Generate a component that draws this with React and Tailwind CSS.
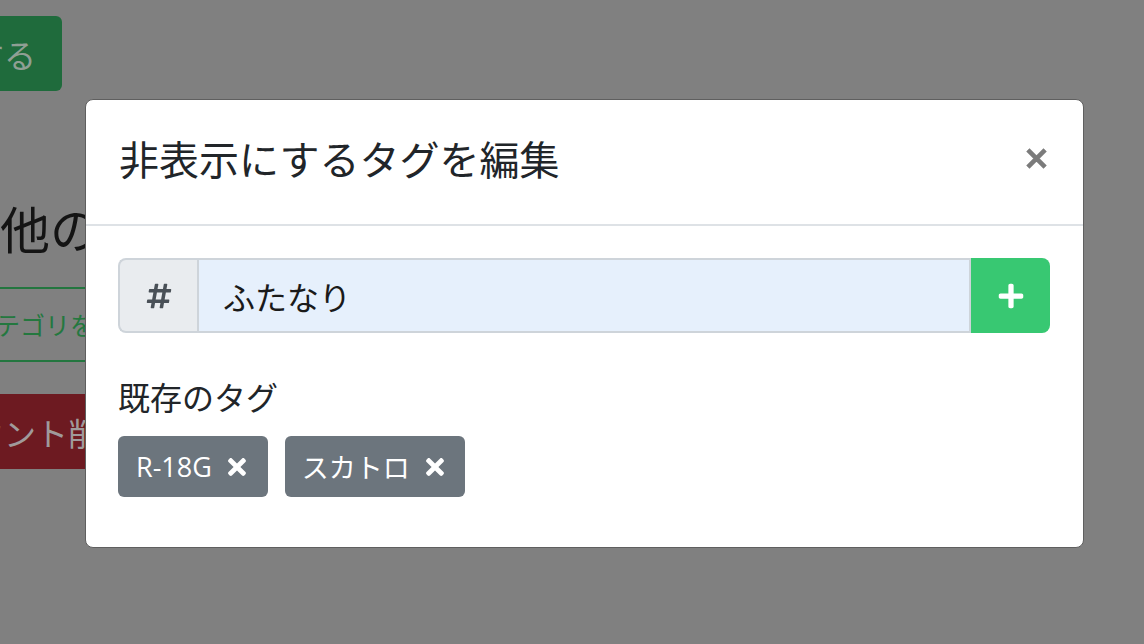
import React from "react";
import { FaHashtag, FaPlus, FaTimes } from "react-icons/fa";

const font = { fontFamily: '"Noto Sans CJK JP", "Noto Sans", sans-serif' };

export default function App() {
  return (
    <div
      className="relative w-[1144px] h-[644px] overflow-hidden bg-[#808080]"
      style={font}
    >
      {/* dimmed page underneath */}
      <div className="flex flex-col w-[86px] overflow-hidden">
        <div className="mt-[16px] w-[62px] h-[75px] rounded-r-[6px] bg-[#1f6b3c] flex items-center justify-end pr-[26px] overflow-hidden">
          <span className="text-[32px] leading-none text-[#8f9f94] whitespace-nowrap">する</span>
        </div>
        <div className="mt-[106px] h-[60px] flex items-center whitespace-nowrap">
          <span className="text-[50px] leading-none text-[#141414]">他の設定</span>
        </div>
        <div className="mt-[30px] h-[75px] border-y-2 border-[#23763f] flex items-center whitespace-nowrap">
          <span className="ml-[-30px] text-[25px] leading-none text-[#24783f]">カテゴリを編集</span>
        </div>
        <div className="mt-[32px] h-[75px] bg-[#6d1a21] flex items-center whitespace-nowrap">
          <span className="ml-[-92px] text-[32px] leading-none text-[#a09a9b]">アカウント削除</span>
        </div>
      </div>

      {/* modal */}
      <div className="absolute left-[85px] top-[99px] w-[999px] bg-white border border-[#5f5f5f] rounded-[8px] overflow-hidden">
        <div className="flex items-center justify-between pl-[33px] pr-[35px] pt-[28px] pb-[36px] border-b-2 border-[#dee2e6]">
          <h5 className="text-[40px] leading-[60px] text-[#212529]">
            非表示にするタグを編集
          </h5>
          <button className="flex items-center">
            <svg width="23" height="23" viewBox="0 0 24 24">
              <path d="M3 3 L21 21 M21 3 L3 21" stroke="#7b7b7b" strokeWidth="4.8" strokeLinecap="butt" />
            </svg>
          </button>
        </div>
        <div className="pl-[32px] pr-[33px] pt-[32px] pb-[50px]">
          <div className="flex h-[75px]">
            <div className="w-[79px] flex items-center justify-center bg-[#e9ecef] border-2 border-r-0 border-[#ced4da] rounded-l-[8px]">
              <FaHashtag className="text-[#495057]" size={28} />
            </div>
            <div className="flex-1 flex items-center bg-[#e6f0fc] border-2 border-[#ced4da] pl-[24px]">
              <span className="text-[32px] leading-none text-[#1a1a1a]">ふたなり</span>
            </div>
            <button className="w-[79px] flex items-center justify-center bg-[#38c872] rounded-r-[8px]">
              <FaPlus className="text-white" size={28} />
            </button>
          </div>
          <div className="mt-[39px] text-[32px] leading-[48px] text-[#212529]">既存のタグ</div>
          <div className="mt-[16px] flex gap-[17px]">
            <span className="h-[61px] flex items-center gap-[12px] pl-[18px] pr-[18px] bg-[#6c757d] rounded-[6px] text-white text-[27px] leading-none">
              <span style={{ fontFamily: '"Open Sans", "Noto Sans CJK JP", sans-serif' }}>R-18G</span>
              <FaTimes size={26} />
            </span>
            <span className="h-[61px] flex items-center gap-[12px] pl-[17px] pr-[17px] bg-[#6c757d] rounded-[6px] text-white text-[27px] leading-none">
              <span>スカトロ</span>
              <FaTimes size={26} />
            </span>
          </div>
        </div>
      </div>
    </div>
  );
}
